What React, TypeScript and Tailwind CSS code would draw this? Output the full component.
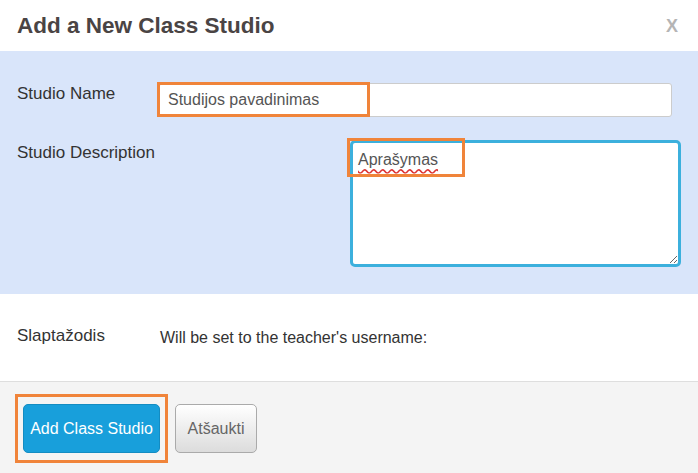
import React from 'react';

const font = { fontFamily: '"Liberation Sans", Arial, sans-serif' };

export default function App() {
  return (
    <div className="w-[698px] h-[473px] bg-white flex flex-col overflow-hidden" style={font}>
      {/* Header */}
      <div className="h-[51px] shrink-0 flex items-center justify-between pl-[17px] pr-[20px]">
        <h1 className="text-[22.5px] font-bold text-[#4a4444]">Add a New Class Studio</h1>
        <span className="text-[18px] font-bold text-[#b5b5b5] leading-none">X</span>
      </div>

      {/* Form fields */}
      <div className="h-[243px] shrink-0 bg-[#d9e5fa] pl-[17px] pt-[32px] flex flex-col gap-[23px]">
        <div className="flex items-start pr-[26px]">
          <label className="w-[142px] shrink-0 text-[17px] leading-[22px] text-[#333]">Studio Name</label>
          <div className="relative flex-1">
            <input
              defaultValue="Studijos pavadinimas"
              className="w-full h-[34px] bg-white border border-[#ccc] rounded-[3px] px-[8px] text-[16px] text-[#555] outline-none"
            />
            <div className="absolute left-[-2px] top-[-1px] w-[213px] h-[35px] border-[3px] border-[#f0843a] pointer-events-none" />
          </div>
        </div>
        <div className="flex items-start pr-[17px]">
          <label className="flex-1 pt-[2px] text-[17px] leading-[22px] text-[#333]">Studio Description</label>
          <div className="relative w-[331px] shrink-0">
            <textarea
              defaultValue="Aprašymas"
              spellCheck={false}
              className="block w-full h-[127px] bg-white border-[3px] border-[#3cb0dd] rounded-[5px] px-[5px] pt-[6px] pb-[5px] text-[16px] leading-[22px] text-[#555] underline decoration-wavy decoration-[#d33] underline-offset-[3px] outline-none resize-y"
            />
            <div className="absolute left-[-3px] top-[-2px] w-[118px] h-[39px] border-[3px] border-[#f0843a] pointer-events-none" />
          </div>
        </div>
      </div>

      {/* Password info */}
      <div className="h-[87px] shrink-0 flex items-center pl-[17px]">
        <span className="w-[143px] shrink-0 text-[17px] text-[#333] -mt-[3px]">Slaptažodis</span>
        <span className="text-[16px] text-[#333]">Will be set to the teacher's username:</span>
      </div>

      {/* Footer */}
      <div className="flex-1 bg-[#f4f4f4] border-t border-[#dedede] pl-[15px] pt-[12px] flex items-start gap-[7px]">
        <div className="border-[3px] border-[#f0843a] px-[5px] py-[7px]">
          <button className="w-[137px] h-[49px] rounded-[5px] bg-[#189fdb] border border-[#148cc2] text-white text-[16px]">
            Add Class Studio
          </button>
        </div>
        <button className="mt-[10px] w-[82px] h-[49px] rounded-[5px] bg-gradient-to-b from-white to-[#dcdcdc] border border-[#aaa] text-[#666] text-[16px]">
          Atšaukti
        </button>
      </div>
    </div>
  );
}
